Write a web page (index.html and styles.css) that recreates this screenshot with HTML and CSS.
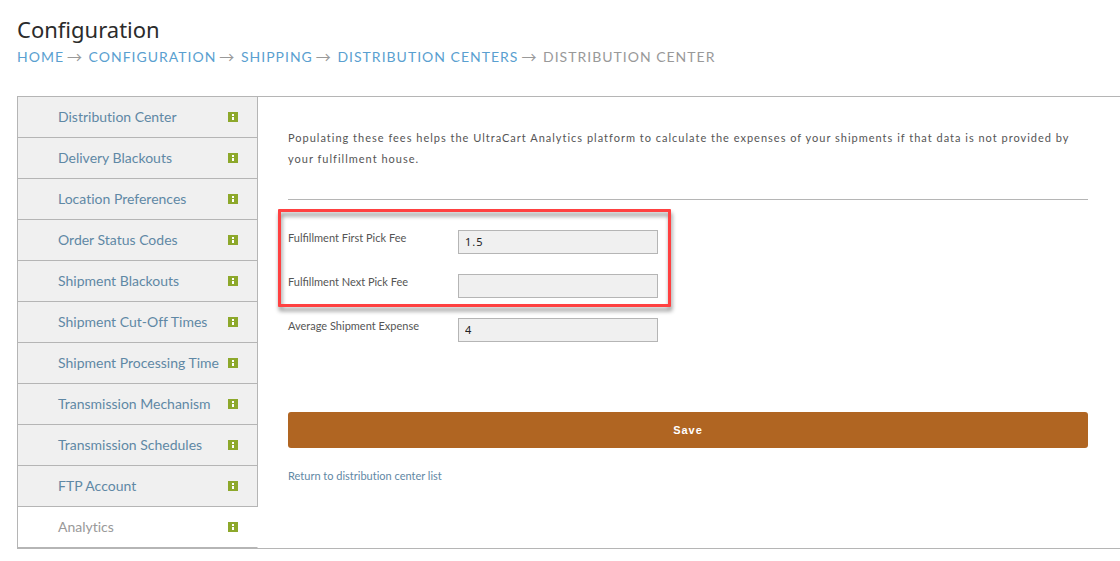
FILE: index.html
```
<!DOCTYPE html>
<html lang="en">
<head>
<meta charset="utf-8">
<title>Configuration</title>
<link rel="stylesheet" href="styles.css">
</head>
<body>
<svg class="defs" aria-hidden="true">
  <symbol id="info" viewBox="0 0 10 10"><path fill="#8da82b" d="M0 0h10v10H0z"/><path fill="#fff" d="M4 2h2v2H4zM4 5h2v3H4z"/></symbol>
</svg>
<header class="page-header">
  <h1 class="title">Configuration</h1>
  <nav class="crumbs" aria-label="Breadcrumb">
    <a href="#">HOME</a><span class="arrow">→</span>
    <a href="#">CONFIGURATION</a><span class="arrow">→</span>
    <a href="#">SHIPPING</a><span class="arrow">→</span>
    <a href="#">DISTRIBUTION CENTERS</a><span class="arrow">→</span>
    <span>DISTRIBUTION CENTER</span>
  </nav>
</header>
<main class="panel">
  <nav class="tabs" aria-label="Sections">
    <a class="tab" href="#">Distribution Center<svg class="info"><use href="#info"/></svg></a>
    <a class="tab" href="#">Delivery Blackouts<svg class="info"><use href="#info"/></svg></a>
    <a class="tab" href="#">Location Preferences<svg class="info"><use href="#info"/></svg></a>
    <a class="tab" href="#">Order Status Codes<svg class="info"><use href="#info"/></svg></a>
    <a class="tab" href="#">Shipment Blackouts<svg class="info"><use href="#info"/></svg></a>
    <a class="tab" href="#">Shipment Cut-Off Times<svg class="info"><use href="#info"/></svg></a>
    <a class="tab" href="#">Shipment Processing Time<svg class="info"><use href="#info"/></svg></a>
    <a class="tab" href="#">Transmission Mechanism<svg class="info"><use href="#info"/></svg></a>
    <a class="tab" href="#">Transmission Schedules<svg class="info"><use href="#info"/></svg></a>
    <a class="tab" href="#">FTP Account<svg class="info"><use href="#info"/></svg></a>
    <a class="tab active" href="#" aria-current="page">Analytics<svg class="info"><use href="#info"/></svg></a>
  </nav>
  <form class="content">
    <p class="intro">Populating these fees helps the UltraCart Analytics platform to calculate the expenses of your shipments if that data is not provided by your fulfillment house.</p>
    <div class="fields">
      <div class="fields highlighted">
        <div class="field"><label for="first">Fulfillment First Pick Fee</label><input id="first" type="text" value="1.5"></div>
        <div class="field"><label for="next">Fulfillment Next Pick Fee</label><input id="next" type="text"></div>
      </div>
      <div class="field"><label for="average">Average Shipment Expense</label><input id="average" type="text" value="4"></div>
    </div>
    <button class="save" type="button">Save</button>
    <a class="return" href="#">Return to distribution center list</a>
  </form>
</main>
</body>
</html>
```
FILE: styles.css
```
*, *::after { box-sizing: border-box; }
body {
  margin: 0;
  padding: 15px 0 12px 17px;
  background: #fff;
  color: #555;
  font-family: Lato, "Liberation Sans", sans-serif;
  font-size: 11px;
}
a { text-decoration: none; }
.defs { display: none; }
.title {
  margin: 0;
  color: #2b2b2b;
  font: 400 22px/28px "Noto Sans", "Open Sans", sans-serif;
}
.crumbs {
  margin: 2px 0 28px;
  color: #999;
  font-size: 14px;
  line-height: 23px;
  letter-spacing: 1px;
}
.crumbs a { color: #5a9fd0; }
.arrow {
  margin: 0 1px 0 3px;
  font-family: "Noto Sans CJK JP", sans-serif;
  font-size: 15px;
  line-height: 1;
  vertical-align: -1px;
}
.panel {
  display: flex;
  border: solid #b5b5b5;
  border-width: 1px 0 1px 1px;
}
.tabs {
  flex: 0 0 240px;
  display: flex;
  flex-direction: column;
}
.tab {
  display: flex;
  align-items: flex-start;
  justify-content: space-between;
  height: 41px;
  padding: 0 19px 0 40px;
  border: solid #b5b5b5;
  border-width: 0 1px 1px 0;
  background: #f0f0f0;
  color: #5f88a5;
  font-size: 14px;
  font-variant-ligatures: none;
  line-height: 40px;
  white-space: nowrap;
}
.tab.active {
  border-right-color: transparent;
  background: #fff;
  color: #999;
}
.info {
  flex: none;
  width: 10px;
  height: 10px;
  margin-top: 15px;
}
.content {
  flex: 1;
  padding: 30px 32px 32px 30px;
}
.intro {
  margin: 0 0 30px;
  padding-bottom: 30px;
  border-bottom: 1px solid #b5b5b5;
  line-height: 21px;
  letter-spacing: 1px;
}
.fields {
  display: flex;
  flex-direction: column;
  gap: 20px;
}
.highlighted { position: relative; }
.highlighted::after {
  content: "";
  position: absolute;
  top: -21px;
  left: -10px;
  width: 393px;
  height: 98px;
  border: 3px solid #ff4141;
  border-radius: 1px;
  filter: drop-shadow(1px 4px 2px rgba(0, 0, 0, .45));
  pointer-events: none;
}
.field {
  display: flex;
  align-items: flex-start;
}
.field label {
  width: 170px;
  line-height: 16px;
}
.field input {
  width: 200px;
  height: 24px;
  padding: 0 6px 2px;
  border: 1px solid #b5b5b5;
  border-radius: 0;
  background: #f0f0f0;
  color: #222;
  font: 11px "Noto Sans", sans-serif;
  letter-spacing: 1px;
}
.save {
  display: block;
  width: 100%;
  height: 36px;
  margin: 70px 0 20px;
  border: 0;
  border-radius: 3px;
  background: #b06522;
  color: #fff;
  font: 700 11px "Liberation Sans", Arial, sans-serif;
  letter-spacing: 1px;
}
.return {
  color: #5f88a5;
  font-variant-ligatures: none;
  line-height: 16px;
}
```
